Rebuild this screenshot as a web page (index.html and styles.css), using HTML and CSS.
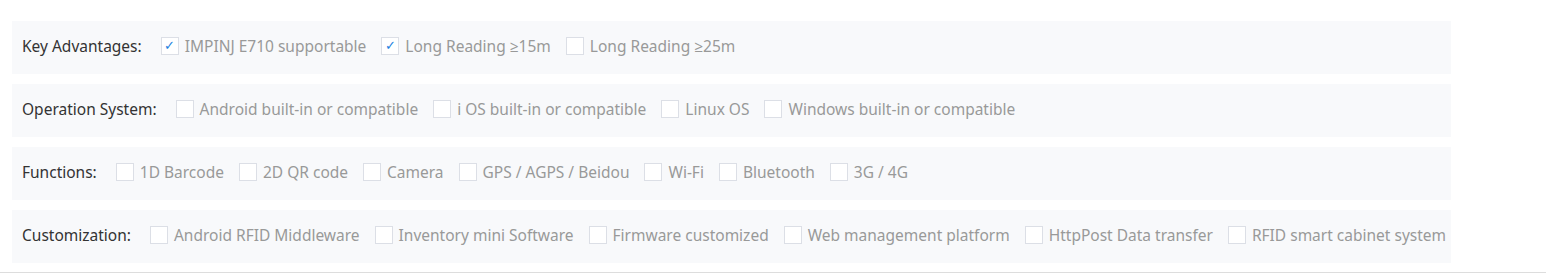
FILE: index.html
```html
<!DOCTYPE html>
<html>
<head>
<meta charset="utf-8">
<link rel="stylesheet" href="styles.css">
</head>
<body>
<div class="filters">
  <div class="row">
    <span class="label">Key Advantages:</span>
    <label class="opt"><span class="box checked">✓</span>IMPINJ E710 supportable</label>
    <label class="opt"><span class="box checked">✓</span>Long Reading ≥15m</label>
    <label class="opt"><span class="box"></span>Long Reading ≥25m</label>
  </div>
  <div class="row">
    <span class="label">Operation System:</span>
    <label class="opt"><span class="box"></span>Android built-in or compatible</label>
    <label class="opt"><span class="box"></span>i OS built-in or compatible</label>
    <label class="opt"><span class="box"></span>Linux OS</label>
    <label class="opt"><span class="box"></span>Windows built-in or compatible</label>
  </div>
  <div class="row">
    <span class="label">Functions:</span>
    <label class="opt"><span class="box"></span>1D Barcode</label>
    <label class="opt"><span class="box"></span>2D QR code</label>
    <label class="opt"><span class="box"></span>Camera</label>
    <label class="opt"><span class="box"></span>GPS / AGPS / Beidou</label>
    <label class="opt"><span class="box"></span>Wi-Fi</label>
    <label class="opt"><span class="box"></span>Bluetooth</label>
    <label class="opt"><span class="box"></span>3G / 4G</label>
  </div>
  <div class="row">
    <span class="label">Customization:</span>
    <label class="opt"><span class="box"></span>Android RFID Middleware</label>
    <label class="opt"><span class="box"></span>Inventory mini Software</label>
    <label class="opt"><span class="box"></span>Firmware customized</label>
    <label class="opt"><span class="box"></span>Web management platform</label>
    <label class="opt"><span class="box"></span>HttpPost Data transfer</label>
    <label class="opt"><span class="box"></span>RFID smart cabinet system</label>
  </div>
</div>
</body>
</html>
```
FILE: styles.css
```css
* { box-sizing: border-box; }
html, body { margin: 0; padding: 0; background: #fff; }
body {
  font-family: "Noto Sans", "Open Sans", sans-serif;
  font-size: 15.5px;
}
.filters {
  padding: 21px 95px 9px 12px;
  border-bottom: 1px solid #dddddd;
  display: flex;
  flex-direction: column;
  gap: 10px;
}
.row {
  height: 53px;
  background: #f8f9fb;
  display: flex;
  align-items: center;
  padding: 0 10px 4px;
  gap: 15px;
  white-space: nowrap;
}
.label {
  color: #333;
  margin-right: 4px;
  flex-shrink: 0;
}
.opt {
  display: flex;
  align-items: center;
  gap: 6px;
  color: #999;
  flex-shrink: 0;
}
.box {
  width: 18px;
  height: 18px;
  border: 1px solid #dcdfe6;
  background: #fff;
  display: flex;
  align-items: center;
  justify-content: center;
  color: #1e7fe0;
  font-size: 13px;
  line-height: 1;
}
```
